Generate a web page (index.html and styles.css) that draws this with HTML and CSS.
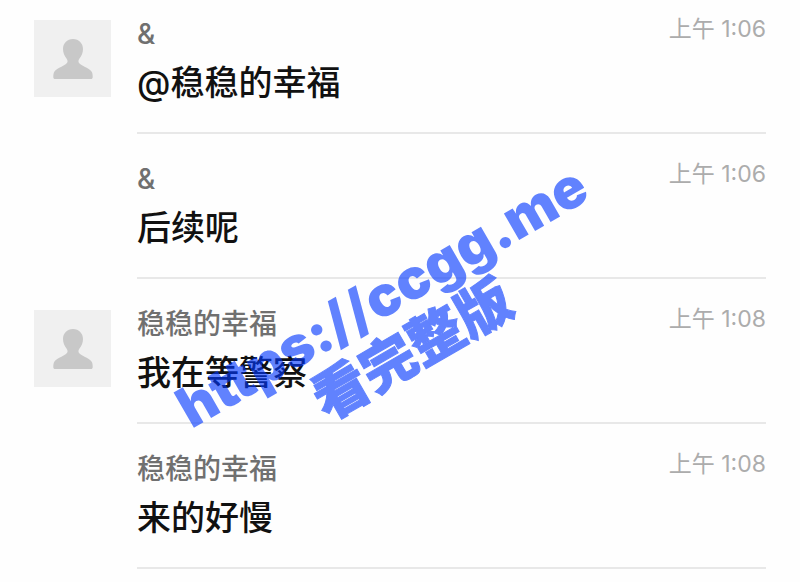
FILE: index.html
```
<!DOCTYPE html>
<html lang="zh-CN">
  <head>
    <meta charset="UTF-8" />
    <meta name="viewport" content="width=device-width, initial-scale=1.0" />
    <title>聊天记录</title>
    <link rel="stylesheet" href="styles.css">
  </head>
  <body>
    <svg class="symbols" aria-hidden="true">
      <symbol id="person" viewBox="0 0 40 40">
        <path d="M20 0C14 0 10 4.500 10 10c0 4 1.500 7 3.500 9.500 1.500 2.300 1.500 4-.5 5.500C9 28 3 29.500 1.200 33 .5 34.300.3 36 .3 38c0 1.400.7 2 1.900 2h35.600c1.200 0 1.900-.6 1.900-2 0-2-.2-3.700-.9-5C37 29.500 31 28 27 25c-2-1.500-2-3.200-.5-5.500C28.500 17 30 14 30 10 30 4.500 26 0 20 0z" />
      </symbol>
    </svg>

    <main class="chat">
      <article class="message">
        <div class="avatar"><svg class="person"><use href="#person" /></svg></div>
        <div class="content">
          <header class="meta">
            <span class="name">&amp;</span>
            <time class="time">上午 1:06</time>
          </header>
          <p class="text">@稳稳的幸福</p>
        </div>
      </article>
      <article class="message">
        <div class="content">
          <header class="meta">
            <span class="name">&amp;</span>
            <time class="time">上午 1:06</time>
          </header>
          <p class="text">后续呢</p>
        </div>
      </article>
      <article class="message">
        <div class="avatar"><svg class="person"><use href="#person" /></svg></div>
        <div class="content">
          <header class="meta">
            <span class="name">稳稳的幸福</span>
            <time class="time">上午 1:08</time>
          </header>
          <p class="text">我在等警察</p>
        </div>
      </article>
      <article class="message">
        <div class="content">
          <header class="meta">
            <span class="name">稳稳的幸福</span>
            <time class="time">上午 1:08</time>
          </header>
          <p class="text">来的好慢</p>
        </div>
      </article>
    </main>

    <div class="watermark">
      <p class="watermark-url">https://ccgg.me</p>
      <p class="watermark-label">看完整版</p>
    </div>
  </body>
</html>
```

FILE: styles.css
```
* {
  box-sizing: border-box;
}
body {
  position: relative;
  margin: 0;
  background-color: #fefefe;
  font-family: Inter, "Noto Sans CJK SC", sans-serif;
  font-weight: 500;
  overflow-x: hidden;
}
p {
  margin: 0;
}
.symbols {
  display: none;
}
.chat {
  padding: 0 34px;
}
.message {
  display: grid;
  grid-template-columns: 77px 1fr;
  column-gap: 26px;
  padding-top: 24px;
}
.message:first-child {
  padding-top: 13px;
}
.avatar {
  display: flex;
  justify-content: center;
  align-items: center;
  height: 77px;
  margin-top: 7px;
  background-color: #f0f0f0;
}
.person {
  width: 40px;
  height: 40px;
  fill: #c8c8c8;
}
.content {
  grid-column: 2;
  padding-bottom: 24px;
  border-bottom: 2px solid #e8e8e8;
}
.meta {
  display: flex;
  justify-content: space-between;
  align-items: flex-start;
}
.name {
  font-size: 28px;
  line-height: 43px;
  color: #707070;
}
.time {
  font-size: 23px;
  line-height: 32px;
  font-weight: 400;
  color: #acacac;
}
.text {
  padding-top: 2px;
  font-size: 34px;
  line-height: 50px;
  color: #111;
}
.watermark {
  position: absolute;
  top: 264px;
  left: 167px;
  color: #0237ff;
  opacity: 0.62;
  font-weight: 900;
  text-align: center;
  white-space: nowrap;
  transform: rotate(-30deg);
  pointer-events: none;
}
.watermark-url {
  font-size: 56px;
  line-height: 56px;
}
.watermark-label {
  font-size: 55px;
  line-height: 66px;
  -webkit-text-stroke: 1px #0237ff;
}
```
